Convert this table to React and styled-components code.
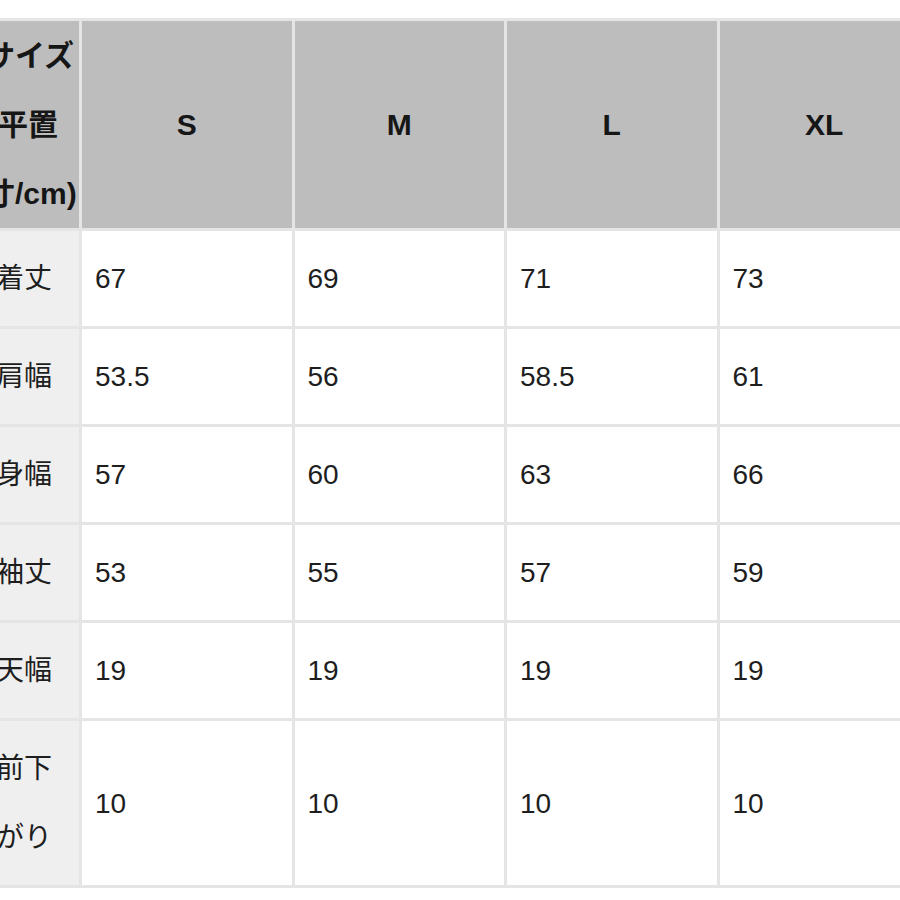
import React from 'react';
import styled, {createGlobalStyle} from 'styled-components';

const GlobalStyle = createGlobalStyle`
  html, body {
    margin: 0;
    padding: 0;
    background: #ffffff;
  }
  body {
    font-family: "Liberation Sans", "Noto Sans CJK JP", sans-serif;
    color: #1c1c1c;
  }
`;

const Page = styled.div`
  width: 900px;
  height: 900px;
  overflow: hidden;
  padding-top: 18px;
  box-sizing: border-box;
  background: #ffffff;
`;

const Table = styled.table`
  margin-left: -20px;
  table-layout: fixed;
  border-collapse: separate;
  border-spacing: 3px;
  background: #e5e5e5;
  width: 949px;
`;

const HeadCell = styled.th`
  background: #bdbdbd;
  font-size: 30px;
  font-weight: bold;
  line-height: 69px;
  padding: 0;
  text-align: center;
  color: #161616;
  padding-left: ${p => p.$label ? '2px' : '0'};
  padding-right: ${p => p.$label ? '18px' : '0'};
  white-space: nowrap;
`;

const Cell = styled.td`
  background: ${p => p.$label ? '#efefef' : '#ffffff'};
  font-size: 28px;
  line-height: 69px;
  padding: 13px 13px;
  text-align: left;
  vertical-align: middle;
  color: #1e1e1e;
  white-space: nowrap;
`;

const Line = styled.span`
  display: block;
`;

const sizes = ['S', 'M', 'L', 'XL'];

const rows = [
    {label: ['着丈'], values: ['67', '69', '71', '73']},
    {label: ['肩幅'], values: ['53.5', '56', '58.5', '61']},
    {label: ['身幅'], values: ['57', '60', '63', '66']},
    {label: ['袖丈'], values: ['53', '55', '57', '59']},
    {label: ['天幅'], values: ['19', '19', '19', '19']},
    {label: ['前下', 'がり'], values: ['10', '10', '10', '10']},
];

const App = () => {
    return (
        <>
            <GlobalStyle/>
            <Page>
                <Table>
                    <colgroup>
                        <col style={{width: '96px'}}/>
                        {sizes.map(s => <col key={s} style={{width: '209.5px'}}/>)}
                    </colgroup>
                    <thead>
                    <tr>
                        <HeadCell $label>
                            <Line>サイズ</Line>
                            <Line>(平置</Line>
                            <Line>寸/cm)</Line>
                        </HeadCell>
                        {sizes.map(s => <HeadCell key={s}>{s}</HeadCell>)}
                    </tr>
                    </thead>
                    <tbody>
                    {rows.map(r => (
                        <tr key={r.label.join('')}>
                            <Cell $label>
                                {r.label.map(l => <Line key={l}>{l}</Line>)}
                            </Cell>
                            {r.values.map((v, i) => <Cell key={i}>{v}</Cell>)}
                        </tr>
                    ))}
                    </tbody>
                </Table>
            </Page>
        </>
    );
};

export default App;
